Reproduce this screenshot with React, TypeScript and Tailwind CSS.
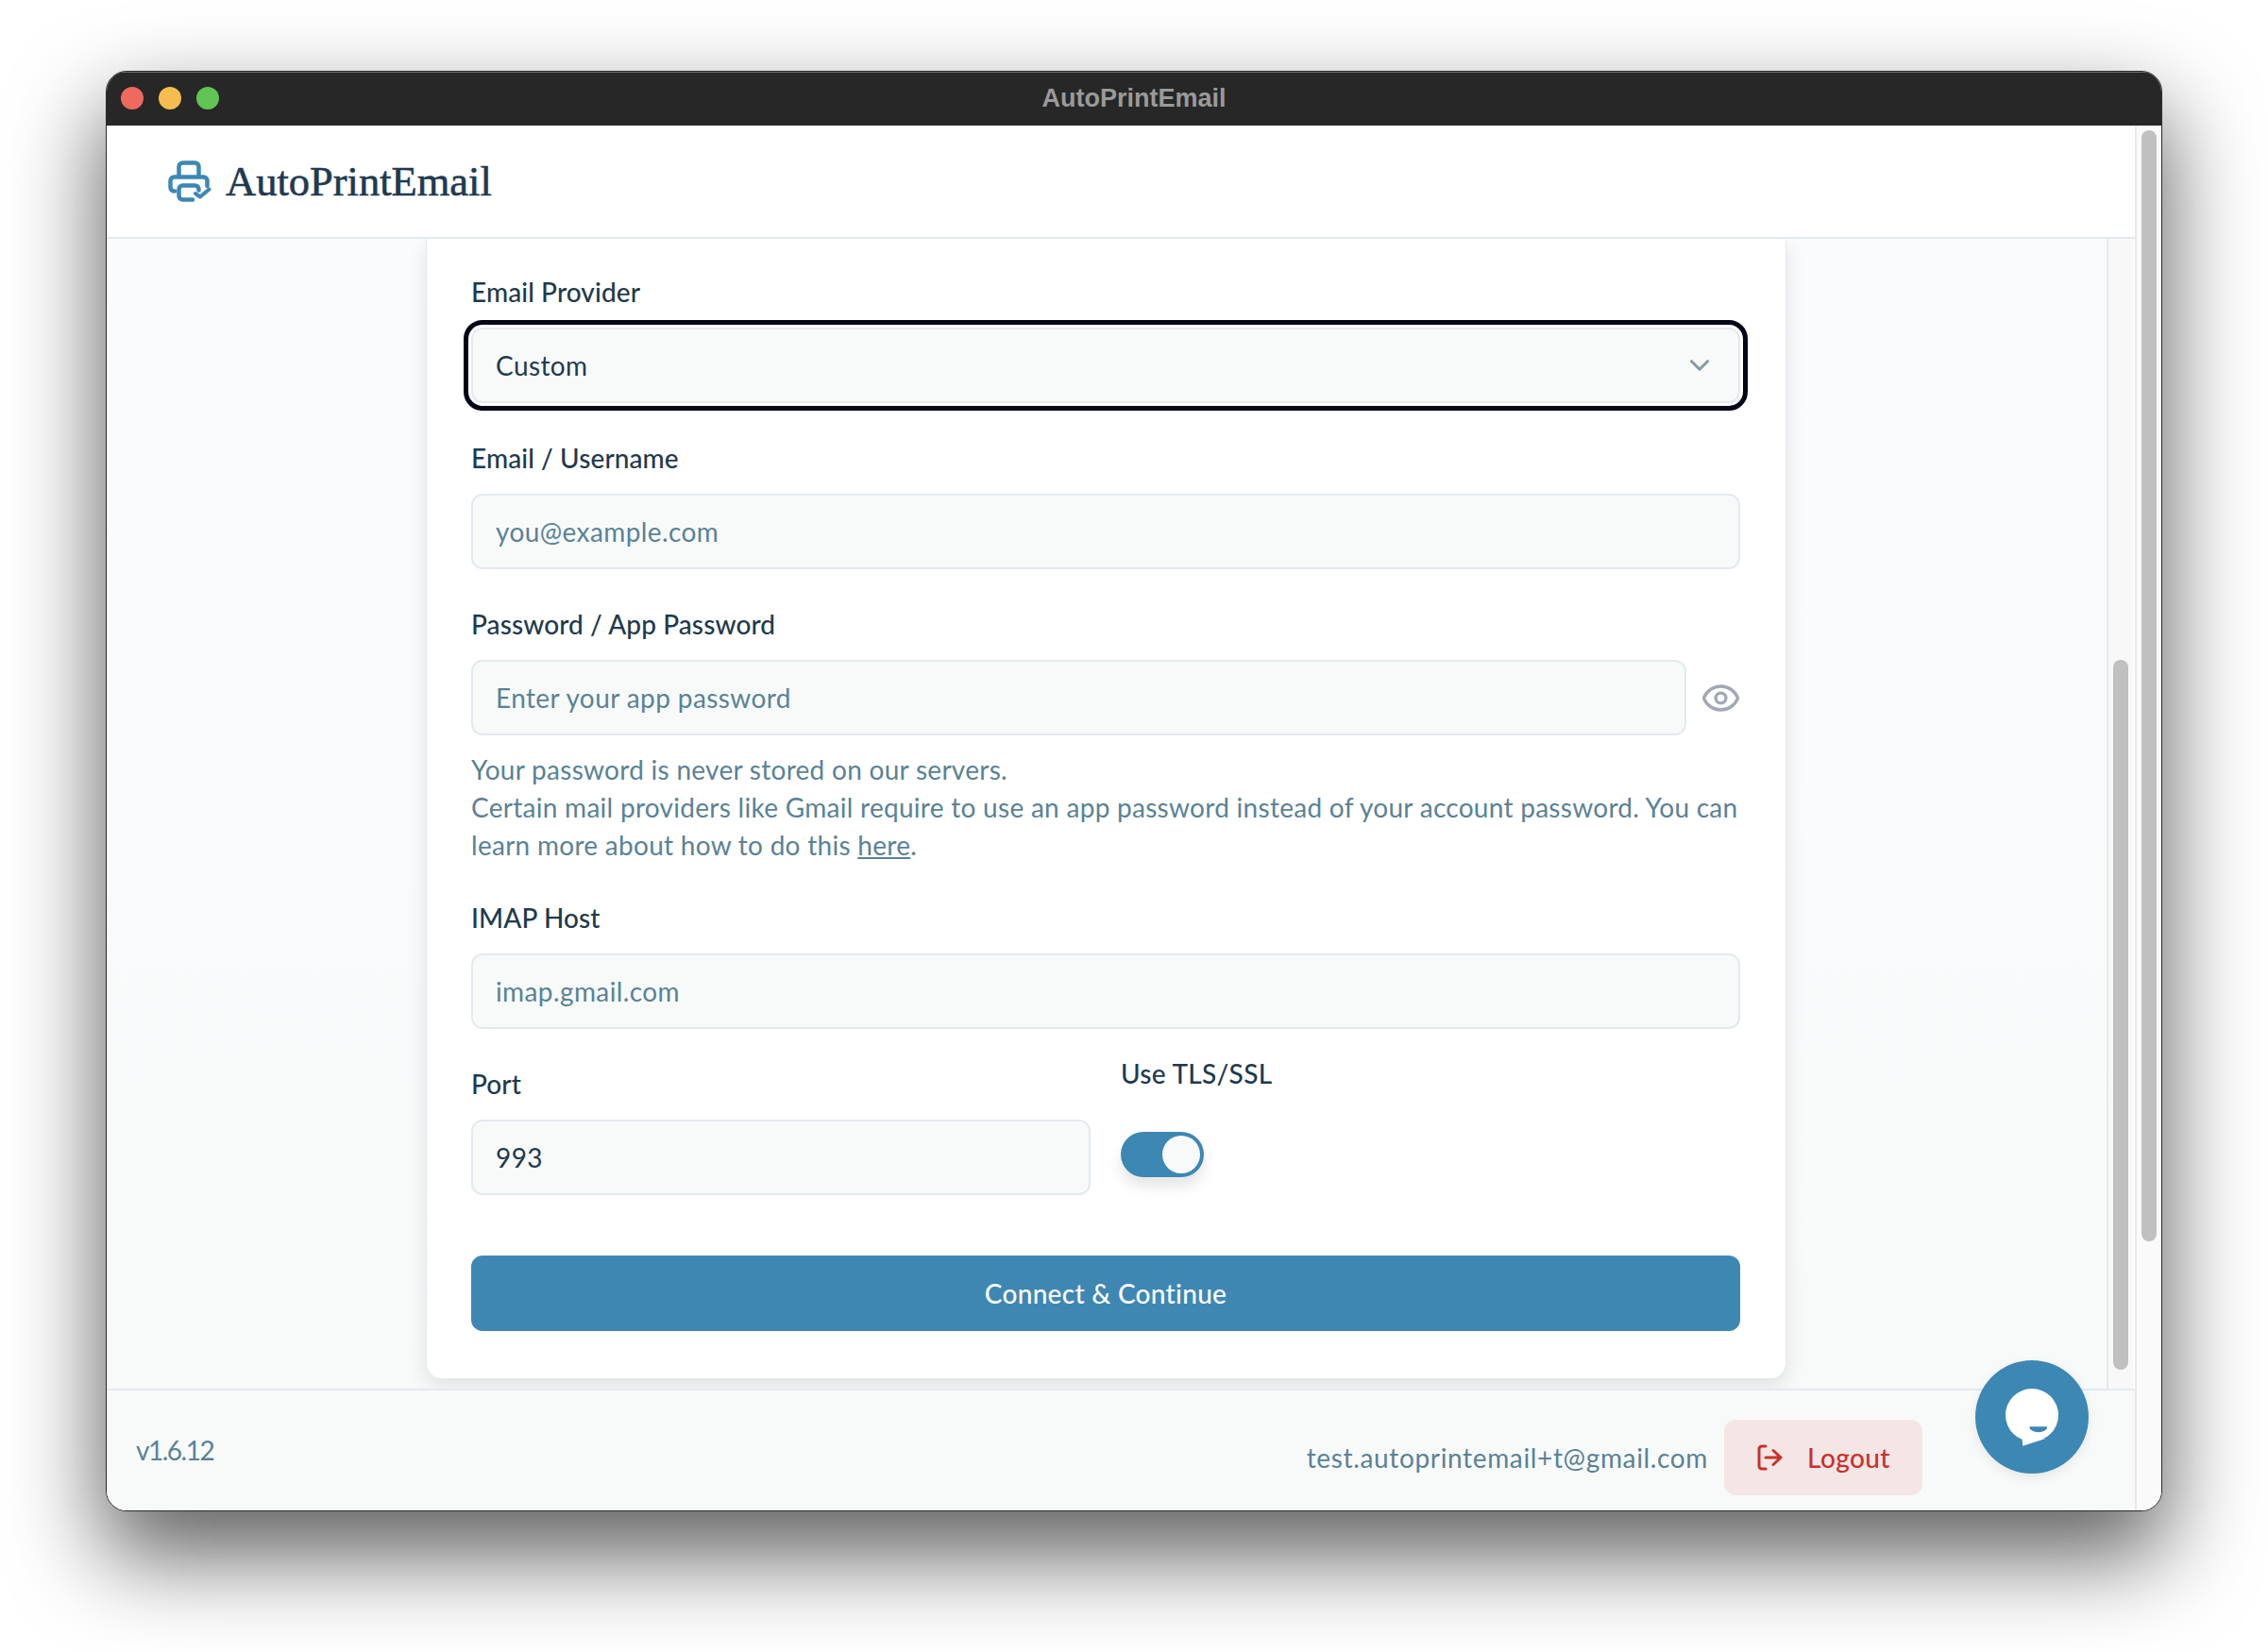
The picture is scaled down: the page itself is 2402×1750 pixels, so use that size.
import { ChevronDown, Eye } from 'lucide-react';

const inputCls =
  'block w-full h-[80px] rounded-xl border-2 border-[#e4e9f0] bg-[#f8fafa] px-6 text-[28px] tracking-[0.4px] text-[#1f3a4d] outline-none placeholder:text-[#5a8296]';
const labelCls = 'block h-[40px] mb-[18px] text-[28px] leading-[40px] tracking-[0.1px] font-medium text-[#1f3a4d]';

function PrinterLogo() {
  return (
    <svg width="46" height="44" viewBox="0 0 46 44" fill="none" stroke="#3d87b4" strokeWidth="4.5" strokeLinecap="round" strokeLinejoin="round">
      <path d="M11.5 15V6.5a4 4 0 0 1 4-4h13a4 4 0 0 1 4 4V15" />
      <path d="M7 32.5H6.5a4 4 0 0 1-4-4v-7a4 4 0 0 1 4-4h31a4 4 0 0 1 4 4V27" />
      <path d="M26 41.5H15.500a4 4 0 0 1-4-4v-7a4 4 0 0 1 4-4h13a4 4 0 0 1 4 4v1" />
      <path d="M29 35l5 3.500L43.500 30.500" strokeWidth="4" />
    </svg>
  );
}

function LogoutIcon() {
  return (
    <svg width="28" height="28" viewBox="0 0 28 28" fill="none" stroke="#c9302c" strokeWidth="3" strokeLinecap="round" strokeLinejoin="round">
      <path d="M10 2H6a3 3 0 0 0-3 3v18a3 3 0 0 0 3 3h4" />
      <path d="M10 14h16M18 6.500l8 7.500-8 7.500" />
    </svg>
  );
}

function ChatBubble() {
  return (
    <svg width="120" height="120" viewBox="0 0 120 120">
      <circle cx="60" cy="58" r="28" fill="#fff" />
      <path d="M49.500 82L50.300 90.700L74 83Z" fill="#fff" />
      <path d="M57.300 70.300h19a9.500 6 0 0 1-19 0Z" fill="#3d87b4" />
    </svg>
  );
}

export default function App() {
  return (
    <div className="w-[2402px] h-[1750px] bg-white pl-[112px] pt-[75px] overflow-hidden" style={{ fontFamily: 'Lato, "Noto Sans", sans-serif' }}>
      <div className="relative w-[2178px] h-[1526px] flex flex-col rounded-[22px] overflow-hidden border border-[#2a2a2a] bg-white shadow-[0_44px_96px_4px_rgba(0,0,0,0.62)]">
        {/* title bar */}
        <div className="relative h-[57px] shrink-0 bg-[#272727] border-t border-[#6e6e6e] flex items-center pl-[15px] pb-[2px] gap-[16px]">
          <span className="w-[24px] h-[24px] rounded-full bg-[#ee6a5f]" />
          <span className="w-[24px] h-[24px] rounded-full bg-[#f5bd4f]" />
          <span className="w-[24px] h-[24px] rounded-full bg-[#61c454]" />
          <span className="absolute inset-x-0 text-center text-[27px] font-semibold text-[#9a9a9a]" style={{ fontFamily: '"Liberation Sans", sans-serif' }}>AutoPrintEmail</span>
        </div>

        <div className="flex flex-1 min-h-0">
          <div className="flex flex-col flex-1 min-w-0">
            {/* header */}
            <div className="h-[120px] shrink-0 bg-white border-b-2 border-[#e4e9f0] flex items-center pl-[65px] gap-[15px]">
              <PrinterLogo />
              <span className="text-[44.5px] text-[#1f3a4f] [-webkit-text-stroke:0.6px_#1f3a4f]" style={{ fontFamily: '"Liberation Serif", serif' }}>AutoPrintEmail</span>
            </div>

            {/* scrolled content */}
            <div className="flex flex-1 min-h-0">
              <div className="flex-1 flex justify-center pr-[1px] bg-gradient-to-b from-[#fafbfd] to-[#f8fafa] overflow-hidden">
                <div className="w-[1441px] h-[1207px] shrink-0 bg-white rounded-b-2xl border-x border-[#e4e8ee] shadow-[0_8px_20px_rgba(0,0,0,0.1)] pl-[47px] pr-[48px] pt-[36px]">
                  <label className={labelCls}>Email Provider</label>
                  <div className="h-[80px] rounded-xl border-2 border-[#e4e9f0] bg-[#f8fafa] pl-6 pr-[24px] flex items-center justify-between text-[28px] text-[#1f3a4d] outline-[5px] outline-offset-[3px] outline-[#020617]">
                    <span className="tracking-[0.4px]">Custom</span>
                    <ChevronDown size={34} strokeWidth={2.2} className="text-[#8a9aa5]" />
                  </div>

                  <label className={`${labelCls} mt-[38px]`}>Email / Username</label>
                  <input className={inputCls} placeholder="you@example.com" />

                  <label className={`${labelCls} mt-[38px]`}>Password / App Password</label>
                  <div className="flex items-center gap-[16px]">
                    <input className={inputCls} placeholder="Enter your app password" />
                    <div className="w-[41px] shrink-0 flex justify-center">
                      <Eye size={43} strokeWidth={1.9} className="shrink-0 text-[#a2a9b5]" />
                    </div>
                  </div>

                  <p className="mt-[16px] text-[28px] leading-[40px] tracking-[0.28px] whitespace-nowrap text-[#5a8296]">
                    Your password is never stored on our servers.
                    <br />
                    Certain mail providers like Gmail require to use an app password instead of your account password. You can
                    <br />
                    learn more about how to do this <a className="underline">here</a>.
                  </p>

                  <label className={`${labelCls} mt-[37px]`}>IMAP Host</label>
                  <input className={inputCls} placeholder="imap.gmail.com" />

                  <div className="grid grid-cols-2 gap-x-[32px] mt-[27px]">
                    <div className="pt-[11px]">
                      <label className={labelCls}>Port</label>
                      <input className={inputCls} defaultValue="993" />
                    </div>
                    <div>
                      <label className="block h-[40px] mb-[42px] text-[28px] leading-[40px] tracking-[0.3px] font-medium text-[#1f3a4d]">Use TLS/SSL</label>
                      <div className="w-[88px] h-[48px] rounded-full bg-[#3d87b4] p-[4px] pl-[44px] shadow-[0_10px_15px_rgba(0,0,0,0.1)]">
                        <div className="w-[40px] h-[40px] rounded-full bg-[#f8fafa]" />
                      </div>
                    </div>
                  </div>

                  <button className="mt-[64px] w-full h-[80px] rounded-xl bg-[#3f87b3] text-[28px] tracking-[0.3px] font-medium text-white">Connect &amp; Continue</button>
                </div>
              </div>
              {/* inner scrollbar */}
              <div className="w-[28px] shrink-0 bg-[#f8f8f8] border-l-2 border-[#e8e8e8] pt-[446px] pb-[20px] pl-[5px] mr-[2px]">
                <div className="w-[16px] h-full rounded-full bg-[#c0c0c0]" />
              </div>
            </div>

            {/* footer */}
            <div className="h-[129px] shrink-0 bg-[#f8fafa] border-t-2 border-[#e4e9f0] flex justify-between pl-[31px] pr-[225px] pt-[31px]">
              <span className="mt-[12px] text-[28px] leading-[40px] tracking-[-1.5px] text-[#5a8296]">v1.6.12</span>
              <div className="flex items-center gap-[17px] h-[80px]">
                <span className="text-[28px] tracking-[0.65px] text-[#5a8296]">test.autoprintemail+t@gmail.com</span>
                <button className="h-[80px] w-[210px] rounded-xl bg-[#f5e6e6] flex items-center pl-[34px] gap-[26px] text-[28px] tracking-[0.4px] font-medium text-[#c9302c]">
                  <LogoutIcon />
                  Logout
                </button>
              </div>
            </div>
          </div>

          {/* window scrollbar */}
          <div className="w-[28px] shrink-0 bg-[#fafafa] border-l-2 border-[#e8e8e8] pt-[5px] pl-[5px]">
            <div className="w-[16px] h-[1177px] rounded-full bg-[#c0c0c0]" />
          </div>
        </div>

        <button className="absolute right-[77px] bottom-[39px] w-[120px] h-[120px] rounded-full bg-[#3d87b4] shadow-[0_4px_12px_rgba(0,0,0,0.08)]">
          <ChatBubble />
        </button>
      </div>
    </div>
  );
}
